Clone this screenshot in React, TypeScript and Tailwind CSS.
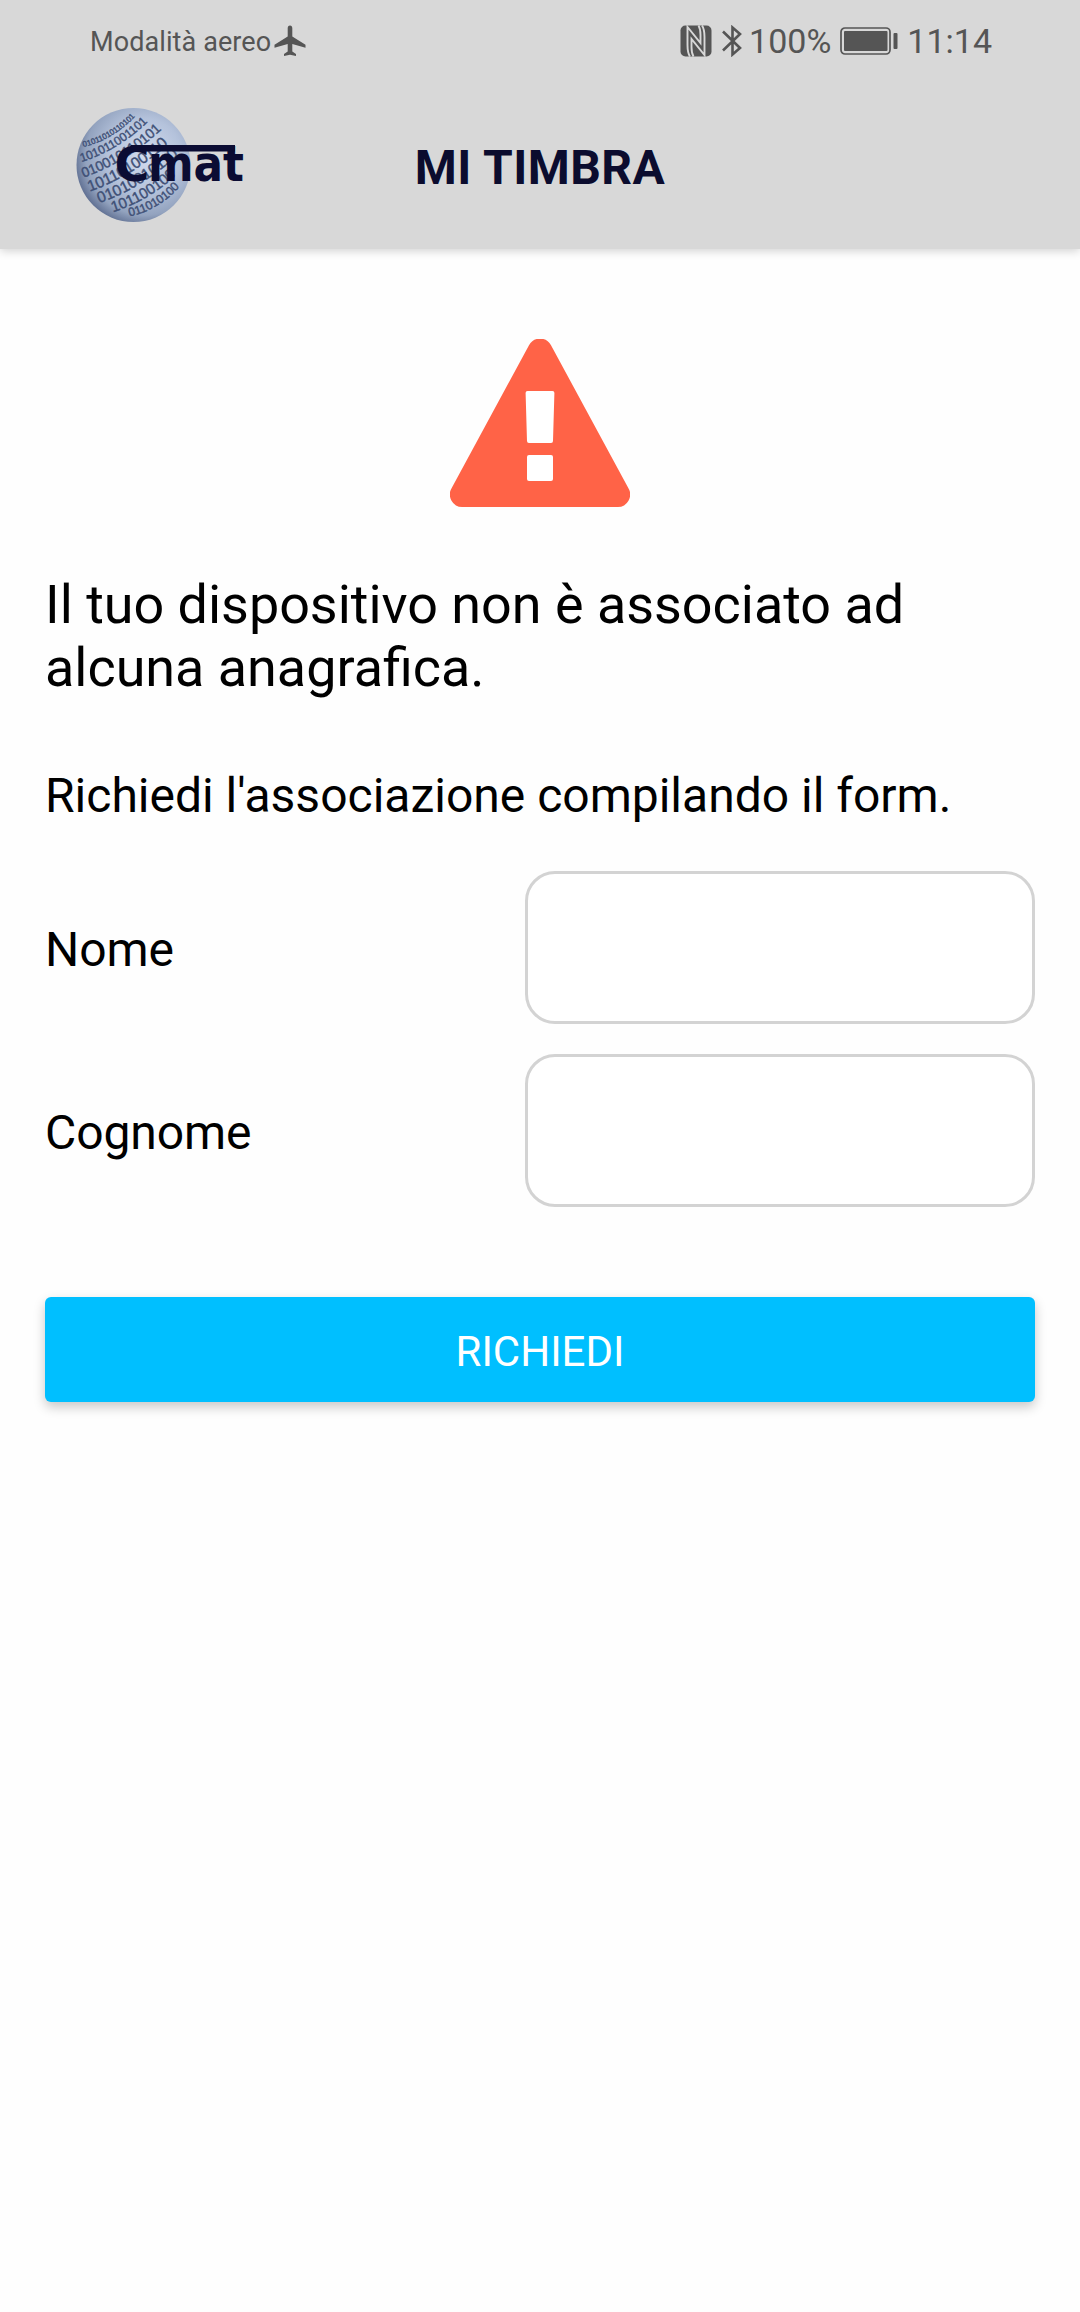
const CENTER = { x: 133.5, y: 165 };
const TILT = { x: 0.84, y: -0.54 };
const NORMAL = { x: 0.54, y: 0.84 };

const bands = [
  { offset: -41, size: 8, digits: "0101101011010110" },
  { offset: -30, size: 12, digits: "1010110011011010" },
  { offset: -16, size: 14, digits: "0100101101011010" },
  { offset: -1, size: 15.5, digits: "1011010011010101" },
  { offset: 14, size: 15.5, digits: "0101001011010110" },
  { offset: 29, size: 15, digits: "1011001001101010" },
  { offset: 42, size: 12, digits: "0110101001011010" },
];

const digitRows = bands.map(({ offset, size, digits }) => {
  const half = Math.sqrt(54 * 54 - offset * offset) - 1;
  const lift = offset + size * 0.15;
  const mx = CENTER.x + NORMAL.x * lift;
  const my = CENTER.y + NORMAL.y * lift;
  const bend = 9;
  const d = `M${mx - TILT.x * half} ${my - TILT.y * half - 3}Q${mx + NORMAL.x * bend} ${my + NORMAL.y * bend} ${mx + TILT.x * half} ${my + TILT.y * half - 3}`;
  const count = Math.floor((half * 2) / (size * 0.6));
  return { d, size, text: digits.slice(0, count) };
});

function Logo() {
  return (
    <svg className="block h-[120px] w-[172px]" viewBox="74 105 172 120" role="img" aria-label="Cmat">
      <defs>
        <radialGradient id="globe" cx="0.6" cy="0.42" r="0.65">
          <stop offset="0" stopColor="#d3dcee" />
          <stop offset="0.5" stopColor="#b4c2db" />
          <stop offset="0.8" stopColor="#93a3bf" />
          <stop offset="1" stopColor="#56668a" />
        </radialGradient>
        {digitRows.map((row, i) => (
          <path key={i} id={`row${i}`} d={row.d} />
        ))}
      </defs>
      <circle cx="133.5" cy="165" r="57" fill="url(#globe)" />
      <g fill="#3f5076" stroke="#3f5076" strokeWidth="0.4" className="font-['Liberation_Sans']">
        {digitRows.map((row, i) => (
          <text key={i} fontSize={row.size}>
            <textPath href={`#row${i}`}>{row.text}</textPath>
          </text>
        ))}
      </g>
      <g fill="#0b0c33" className="font-['DejaVu_Sans'] font-bold">
        <text x="114.500" y="181" fontSize="48" textLength="35" lengthAdjust="spacingAndGlyphs">C</text>
        <text x="148" y="181" fontSize="50" textLength="96" lengthAdjust="spacingAndGlyphs">mat</text>
        <rect x="131" y="145" width="104" height="6.500" />
      </g>
    </svg>
  );
}

function StatusBar() {
  return (
    <div className="flex h-[81px] items-center justify-between pr-[88px] pl-[90px] text-[#555]">
      <div className="flex items-center">
        <span className="pt-[3px] text-[27px] leading-none tracking-[0.1px]">Modalità aereo</span>
        <svg className="ml-[3px] h-8 w-8" viewBox="0 0 32 32" fill="currentColor">
          <path d="M16 0.500c1.500 0 2.300 1.200 2.300 2.700v8.200L31.500 19.800v3L18.300 19v7.500l3.700 2.500v2L16 29.800 10 31v-2l3.700-2.500V19L0.500 22.800v-3l13.200-8.400V3.200C13.700 1.700 14.500 0.500 16 0.500z" />
        </svg>
      </div>
      <div className="flex items-center">
        <svg className="h-8 w-8" viewBox="0 0 32 32">
          <rect x="0.500" y="0.500" width="31" height="31" rx="5" fill="currentColor" />
          <path
            d="M10 31.500C7.600 28 7.500 24 7.500 20V2L20.500 18V10C20.500 6 20 3 18.500 0.500M22 0.500C24.400 4 24.500 8 24.500 12V30L11.500 14V22C11.500 26 12 29 13.500 31.500"
            fill="none"
            stroke="#d8d8d8"
            strokeWidth="1.900"
          />
        </svg>
        <svg className="ml-2.5 h-8 w-5" viewBox="0 0 20 32" fill="none" stroke="currentColor" strokeWidth="2.600">
          <path d="M1 6.500L18 23 10.500 29.500V2.500L18 9 1 25.500" />
        </svg>
        <span className="ml-[7px] pt-[1px] text-[34px] leading-none">100%</span>
        <svg className="ml-[9px] h-7 w-[58px]" viewBox="0 0 58 28">
          <rect x="1" y="1" width="49" height="26" rx="4" fill="none" stroke="currentColor" strokeWidth="1.700" />
          <rect x="4" y="4" width="43.500" height="20" rx="1" fill="currentColor" />
          <rect x="53.500" y="6" width="4" height="16" rx="1" fill="currentColor" />
        </svg>
        <span className="ml-[9px] pt-[1px] text-[34px] leading-none">11:14</span>
      </div>
    </div>
  );
}

function Field({ label }: { label: string }) {
  return (
    <label className="flex h-[153px] items-center justify-between">
      <span className="pt-[5px] text-[48px] leading-[56px] tracking-[-0.1px]">{label}</span>
      <input className="h-full w-[510px] rounded-[30px] border-3 border-[#d3d3d3] bg-white px-6 text-[42px] outline-none" />
    </label>
  );
}

export default function App() {
  return (
    <div className="flex h-[2312px] w-[1080px] flex-col overflow-hidden bg-[#fefefe] font-[Roboto,sans-serif] text-black">
      <header className="h-[249px] shrink-0 bg-[#d8d8d8] shadow-[0_2px_9px_rgba(0,0,0,0.18)]">
        <StatusBar />
        <div className="grid h-[168px] grid-cols-[1fr_auto_1fr] items-center">
          <div className="pl-[74px]">
            <Logo />
          </div>
          <h1 className="pt-[5px] text-[48px] leading-[56px] font-bold tracking-[0.5px] text-[#0b0c2e]">MI TIMBRA</h1>
          <div />
        </div>
      </header>
      <main className="flex flex-col px-[45px] pt-[90px]">
        <svg className="h-[168px] w-[180px] self-center" viewBox="0 0 180 168">
          <path fill="#ff6347" d="M79 6.200A12.500 12.500 0 0 1 101 6.200L178.300 149A12.500 12.500 0 0 1 167.500 168H12.500A12.500 12.500 0 0 1 1.700 149Z" />
          <path fill="#fff" d="M77.500 52H102.500Q104.500 52 104.400 54L103 102Q103 104 101 104H79Q77 104 77 102L75.600 54Q75.500 52 77.500 52Z" />
          <rect x="77" y="116" width="26" height="26" rx="2" fill="#fff" />
        </svg>
        <p className="mt-[66px] text-[53.9px] leading-[63px]">
          Il tuo dispositivo non è associato ad
          <br />
          alcuna anagrafica.
        </p>
        <p className="mt-[69px] text-[48px] leading-[56px]">Richiedi l'associazione compilando il form.</p>
        <form className="mt-[47px] flex flex-col gap-[30px]">
          <Field label="Nome" />
          <Field label="Cognome" />
          <button
            type="button"
            className="mt-[60px] h-[105px] rounded-[6px] bg-[#00bfff] pt-[5px] text-[42px] leading-none text-white shadow-[0_5px_12px_rgba(0,0,0,0.22)]"
          >
            RICHIEDI
          </button>
        </form>
      </main>
    </div>
  );
}
